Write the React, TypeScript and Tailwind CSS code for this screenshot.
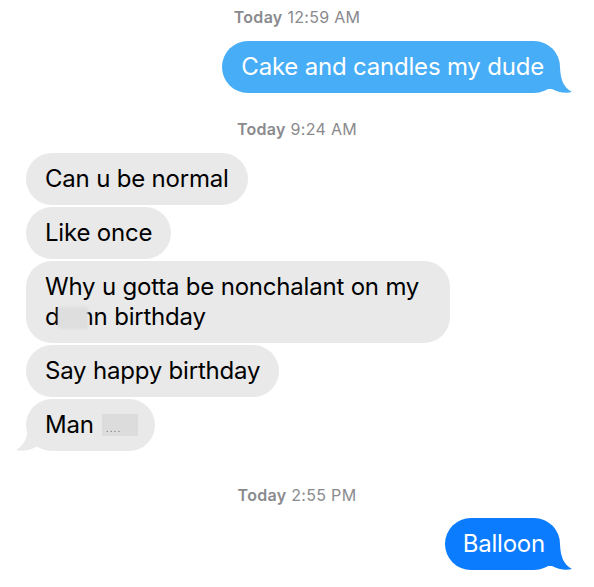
import React from "react";

type Side = "left" | "right";

function Tail({ side, color }: { side: Side; color: string }) {
  // Curved iMessage-style tail hanging off the bottom corner of a bubble
  const pos = side === "right" ? "right-[-12px]" : "left-[-10px] -scale-x-100";
  return (
    <svg
      className={`absolute bottom-0 ${pos}`}
      width="32"
      height="26"
      viewBox="0 0 32 26"
      aria-hidden="true"
    >
      <path
        d="M4 0 L20 0 C20.5 12 23 20 32 25 C26 26.5 18 25.5 12 22 L4 22 Z"
        fill={color}
      />
    </svg>
  );
}

function Stamp({ time, className = "" }: { time: string; className?: string }) {
  return (
    <div className={`text-center text-[16px] leading-[18px] tracking-[0.3px] text-[#8a8a8e] ${className}`}>
      <span className="font-semibold">Today</span> {time}
    </div>
  );
}

function Redact({ className = "" }: { className?: string }) {
  return (
    <span
      className={`inline-block align-middle bg-[#dedede] rounded-[2px] blur-[1px] ${className}`}
    />
  );
}

export default function App() {
  const grey = "#e9e9e9";
  return (
    <div className="w-[594px] h-[587px] bg-white flex flex-col font-['Inter',sans-serif] text-[24px] leading-[30px] tracking-[-0.2px] overflow-hidden">
      <Stamp time="12:59 AM" className="mt-[8px]" />

      <div className="flex justify-end pr-[34px] mt-[15px]">
        <div className="relative rounded-[26px] bg-[#46adf6] text-white pl-[19px] pr-[16px] py-[11px]">
          <span className="relative z-10">Cake and candles my dude</span>
          <Tail side="right" color="#46adf6" />
        </div>
      </div>

      <Stamp time="9:24 AM" className="mt-[27px]" />

      <div className="flex flex-col items-start gap-[2px] pl-[26px] mt-[15px] text-black">
        <div className="rounded-[26px] bg-[#e9e9e9] px-[19px] py-[11px]">Can u be normal</div>
        <div className="rounded-[26px] bg-[#e9e9e9] px-[19px] py-[11px]">Like once</div>
        <div className="rounded-[26px] bg-[#e9e9e9] pl-[19px] pr-[31px] py-[11px]">
          Why u gotta be nonchalant on my
          <br />
          <span className="relative">
            damn
            <Redact className="absolute left-[13px] top-[5px] w-[30px] h-[22px]" />
          </span>{" "}
          birthday
        </div>
        <div className="rounded-[26px] bg-[#e9e9e9] px-[19px] py-[11px]">Say happy birthday</div>
        <div className="relative rounded-[26px] bg-[#e9e9e9] pl-[19px] pr-[17px] py-[11px]">
          <span className="relative z-10 flex items-center">
            Man
            <span className="relative ml-[8px] inline-block w-[36px] h-[22px] bg-[#dcdcdc] blur-[0.5px]">
              <span className="absolute bottom-[3px] left-[4px] text-[10px] leading-none text-[#6b6b6b] tracking-[1px]">
                ....
              </span>
            </span>
          </span>
          <Tail side="left" color={grey} />
        </div>
      </div>

      <Stamp time="2:55 PM" className="mt-[35px]" />

      <div className="flex justify-end pr-[34px] mt-[14px]">
        <div className="relative rounded-[26px] bg-[#0b7cfd] text-white pl-[18px] pr-[15px] py-[11px]">
          <span className="relative z-10">Balloon</span>
          <Tail side="right" color="#0b7cfd" />
        </div>
      </div>
    </div>
  );
}
